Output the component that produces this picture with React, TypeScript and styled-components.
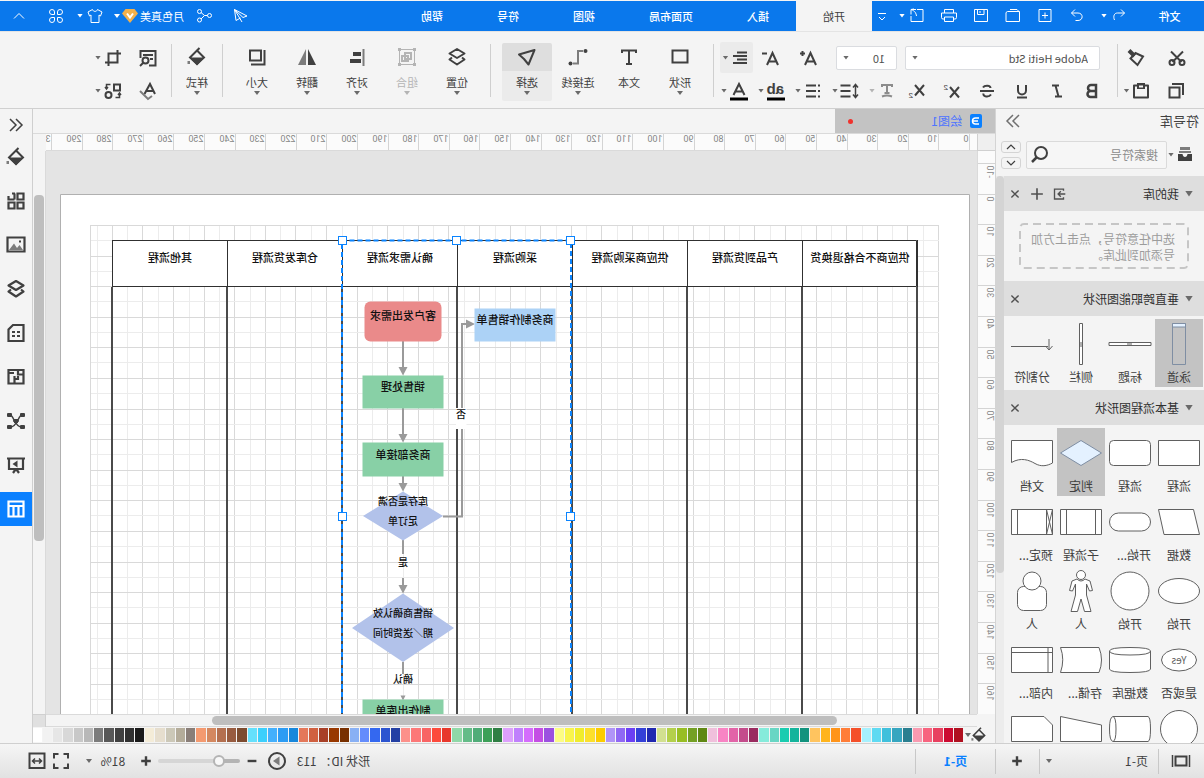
import React from "react";
import styled, { createGlobalStyle, css } from "styled-components";

const Global = createGlobalStyle`
  *, *::before, *::after { box-sizing: border-box; }
  html, body { margin: 0; height: 100%; background: #f4f4f4; }
  body { overflow: hidden; }
  button, input, select { font: inherit; color: inherit; margin: 0; padding: 0; border: 0; background: none; outline: none; }
`;

/* The whole window is shown as its mirror image. */
const Window = styled.div`
  display: flex;
  flex-direction: column;
  height: 100vh;
  padding-top: 1px;
  transform: scaleX(-1);
  background: #f4f4f4;
  color: #404040;
  font-family: "Noto Sans CJK SC", "Noto Sans", sans-serif;
  font-size: 12px;
  line-height: 16px;
`;

/* ---------- icons ---------- */

const Svg = styled.svg<{ $w?: number }>`
  display: block;
  flex: none;
  fill: none;
  stroke: currentColor;
  stroke-width: ${(p) => p.$w ?? 2};
  .f { fill: currentColor; stroke: none; }
  .g { stroke: #7c7c7c; }
  .gf { fill: #7c7c7c; stroke: none; }
  text { fill: currentColor; stroke: none; font-family: "Liberation Sans", sans-serif; }
`;

const glyphs: Record<string, React.ReactNode> = {
  undo: <path d="M8 3.500L4.500 7L8 10.500M4.500 7H11.500C15 7 16 10.500 14.500 14" />,
  redo: <path d="M12 3.500L15.500 7L12 10.500M15.500 7H9C3.500 7 3.500 14.500 9 14.500H11.500" />,
  add: <path d="M4 3.500h12v12H4zM10 6.500v6M7 9.500h6" />,
  open: <path d="M3.500 15.500V5.500h12l1.500 1v9zM4 5.500L6 3.500h7" />,
  save: <path d="M3.500 3.500h13v12h-13zM7 3.500v5h6.500v-5M11 5v2" />,
  print: <path d="M5.500 7V3.500h9V7M5.500 13H4A1.500 1.500 0 0 1 2.500 11.500V7h15v4.500A1.500 1.500 0 0 1 16 13h-1.500M5.500 11h9v4.500h-9z" />,
  exportFile: <path d="M10 3.500H4v12h12V10M11 3.500h5v5M16 3.500C12 5 11 7 10.500 10M13 3L16 3.500" />,
  more: <path d="M6 7.500h8M7 11l3 3 3-3" />,
  send: <path d="M16.500 3.500L4 10l4 1.500L16.500 3.500L15 14.500L10.500 12M16.500 3.500L9 16" />,
  share: <path d="M13.500 5.500a2 2 0 1 0 4 0a2 2 0 1 0-4 0M13.500 14a2 2 0 1 0 4 0a2 2 0 1 0-4 0M3.500 9.500a2 2 0 1 0 4 0a2 2 0 1 0-4 0M7.500 9.500h3L14 6.500M10.500 9.500L14 13" />,
  shirt: <path d="M7.500 3.500L3 6l1.500 4L6 9v7.500h8V9l1.500 1L17 6l-4.500-2.500C12 6 8 6 7.500 3.500z" />,
  apps: <path d="M3.500 6a2.500 2.500 0 1 1 5 0v2.500H6A2.500 2.500 0 0 1 3.500 6zM16.500 6a2.500 2.500 0 1 0-5 0v2.500H14A2.500 2.500 0 0 0 16.500 6zM3.500 14a2.500 2.500 0 1 0 5 0v-2.500H6A2.500 2.500 0 0 0 3.500 14zM16.500 14a2.500 2.500 0 1 1-5 0v-2.500H14a2.500 2.500 0 0 1 2.500 2.500z" />,
  up: <path d="M5 12.500l5-5 5 5" />,
  down: <path d="M5 7.500l5 5 5-5" />,
  cut: <><path d="M4 3.500L14.500 14M16 3.500L5.500 14" /><circle cx="5" cy="14.500" r="2.500" /><circle cx="15" cy="14.500" r="2.500" /></>,
  brush: <><path d="M4 8.500l5.500 8.500L16.500 10.500L11.500 5z" /><path d="M12.500 8L18 2.500" strokeWidth="4" /></>,
  copy: <path d="M7.500 6.500h10v10h-10zM4 14V3h11" />,
  paste: <><path d="M3 4.500h14v12H3z" strokeLinejoin="round" /><path className="f" d="M6 2h8v6H6z" /><path d="M8 5.500h4" stroke="#f4f4f4" strokeWidth="2" /></>,
  fontUp: <path d="M4 17L9.500 5L15 17M6 13.500h7M15 5.500h5M17.500 3v5" />,
  fontDown: <path d="M4 17L9.500 5L15 17M6 13.500h7M15 5.500h5" />,
  align: <path d="M3 4.500h10M3 8h14M3 11.500h10M3 15h14" />,
  bold: <path d="M6 4v12h5.500a3 3 0 0 0 0-6H6h5a3 3 0 0 0 0-6z" strokeWidth="2.500" />,
  italic: <path d="M8 4.500h7M11.500 4.500L8.500 15.500M5 15.500h7" />,
  underline: <path d="M6 4v5.500a4 4 0 0 0 8 0V4M5 16.500h10" />,
  strike: <path d="M14 6.500C12.500 4 6.500 4 6.500 7M6 13.500C8 16.500 14.500 16 13.500 12.500M3 10h14" />,
  sup: <><path d="M3 6l9 10.500M12 6L3 16.500" /><text x="14" y="9" fontSize="8">2</text></>,
  sub: <><path d="M3 4l9 10.500M12 4L3 14.500" /><text x="14" y="17" fontSize="8">2</text></>,
  textEffect: <path d="M5 6V4h10v2M10 4v8M7.500 12h5M5 15.500Q10 13.500 15 15.500" />,
  spacing: <><path d="M9.500 4.500h10M9.500 10h10M9.500 15.500h10" /><path d="M4.500 4v12M2 6.500l2.500-3 2.500 3M2 13.500l2.500 3 2.500-3" strokeWidth="1.500" /></>,
  list: <path d="M7 4.500h10M7 10h10M7 15.500h10M3 4.500h2M3 10h2M3 15.500h2" />,
  highlight: <><text x="2" y="13" fontSize="15" fontWeight="bold">ab</text><path d="M1 18h18" stroke="#000" strokeWidth="3" /></>,
  fontColor: <><path d="M4.500 14L10 3l5.500 11M6.500 10.500h7" /><path d="M1 18h18" stroke="#000" strokeWidth="3" /></>,
  rect: <path d="M2.500 3.500h15v12h-15z" />,
  text: <path d="M3 6V3.500h14V6M10 3.500V17M7 17h6" />,
  connector: <><path className="g" d="M5 4h5v12.500h5" /><circle className="f" cx="2.500" cy="4" r="2" /><circle className="f" cx="17.500" cy="16.500" r="2" /></>,
  select: <path d="M2.500 3L18 7.500L13 12L8.500 17.500z" strokeLinejoin="round" />,
  layers: <path d="M10 2l7.500 4.500L10 11L2.500 6.500zM5 10.500l-2.500 2L10 17.500l7.500-5-2.500-2" strokeLinejoin="round" />,
  group: <><path d="M2.500 2.500h15v15h-15z" strokeWidth="1" /><path d="M6 6h6v6H6zM9 9h6v5H9z" strokeWidth="2" /><path className="f" d="M1 1h3v3H1zM16 1h3v3h-3zM1 16h3v3H1zM16 16h3v3h-3z" /></>,
  alignObj: <><path d="M3.500 2v17" className="g" /><path className="f" d="M6 5h8v4H6zM6 12h11v4H6z" /></>,
  flip: <><path className="f" d="M9 2v16H1z" /><path className="gf" d="M11 2v16h8z" /></>,
  size: <path d="M6 3.500h11v10H6zM2.500 3v14.500H16" />,
  bucket: <><path d="M10 3.500L17 10.500L10 17L3 10.500zM10 3.500L7.500 1" strokeWidth="2" /><path className="f" d="M2.500 10.500h15L10 18.500z" /><path className="gf" d="M17 14h2.500v3H17z" /></>,
  findPage: <><path d="M9 17.500H2.500V3h15v7M5 7h10M5 11h3" /><circle cx="12.500" cy="12.500" r="3" /><path d="M15 15l3 3" /></>,
  spell: <><path d="M3 13L8 3l5.500 10M5 10h7" /><path className="g" d="M6 15l4 3 8-8" /></>,
  crop: <path d="M5.500 2v12.500H18M2 5.500h12.500V18" />,
  replace: <><path d="M3 3.500h6v6H3z" /><circle cx="14.500" cy="14" r="3" /><path d="M12.500 3.500h4v4M15 6l1.500 2L18 6M7.500 16.500h-4v-3M2 14l1.500-2L5 14" strokeWidth="1.500" /></>,
  chevR: <path d="M4 4l6 6-6 6M10 4l6 6-6 6" />,
  chevL: <path d="M16 4l-6 6 6 6M10 4l-6 6 6 6" />,
  drawer: <><path className="gf" d="M5 2h10v3H5zM4 6h12v2H4z" /><path className="f" d="M3 9h4.500q.5 3 2.500 3t2.500-3H17v7H3z" /></>,
  search: <><circle cx="9" cy="8" r="6" /><path d="M13.500 12.500L18 17" strokeWidth="2.500" /></>,
  importLib: <path d="M5 6.500V4.500h10v11H5v-2M3 10h8M8 7l3 3-3 3" />,
  plus: <path d="M10 4v12M4 10h12" />,
  thinPlus: <path d="M10 3.500v13M3.500 10h13" />,
  minus: <path d="M4.500 10h11" />,
  close: <path d="M6 6l8 8M14 6l-8 8" />,
  shapes: <path d="M2.500 2.500h6v6h-6zM11.500 8.500v-6M11 2.500h3M17.500 5v3.500h-6M2.500 11.500h6v6h-6zM11.500 11.500h6v6h-6z" />,
  image: <><path d="M1.500 2.500h17v14h-17z" /><path className="gf" d="M3 15l3.500-5 2.500 3 3-4.500 5 6.500z" /><path className="f" d="M5 5.500h2v2H5z" /></>,
  note: <path d="M2.500 2h10.500l4.500 4.500V18h-15zM6 9h3M11 9h3M6 13h3M11 13h3" />,
  plan: <path d="M2.500 3h15v13.500h-15zM8 3v4.500H3M8 9v3h3.500V9M11.500 12v4.500M12 6h5" />,
  net: <><path d="M4 4C8 4 8 16 16 16M16 4C12 4 12 16 4 16M7 10h6" strokeWidth="1.500" /><rect className="f" x="1" y="2" width="5" height="4" rx="1" /><rect className="f" x="14" y="2" width="5" height="4" rx="1" /><rect className="f" x="1" y="14" width="5" height="4" rx="1" /><rect className="f" x="14" y="14" width="5" height="4" rx="1" /><rect className="f" x="8" y="8" width="4" height="4" /></>,
  present: <><path d="M1 3.500h18M3 3.500v10.500h14V3.500M7 18l2.500-3.500M13 18l-2.500-3.500" /><path className="f" d="M8.500 5.500l5 3.500-5 3.500z" /></>,
  table: <path d="M2.500 2.500h15v15h-15zM2.500 7h15M7.500 7v10.500M12.500 7v10.500" />,
  pages: <><path d="M4.500 5.500h11v9h-11z" /><path d="M1.500 4v12M18.500 4v12" strokeWidth="1.500" /></>,
  play: <><circle cx="10" cy="10" r="8" /><path className="gf" d="M7.500 5.500l6.500 4.500-6.500 4.500z" /></>,
  full: <path d="M3 7.500V3h4.500M12.500 3H17v4.500M17 12.500V17h-4.500M7.500 17H3v-4.500" />,
  fit: <><path d="M2.500 2.500h15v14.500h-15z" /><path d="M5.500 10h9M8 7.500L5.500 10 8 12.500M12 7.500l2.500 2.500-2.500 2.500" strokeWidth="1.500" /></>,
};

const Icon = ({ name, size = 20, weight }: { name: string; size?: number; weight?: number }) => (
  <Svg viewBox="0 0 20 20" width={size} height={size} $w={weight} aria-hidden="true">
    {glyphs[name]}
  </Svg>
);

const Caret = styled.i<{ $color?: string; $big?: boolean }>`
  flex: none;
  width: ${(p) => (p.$big ? 8 : 6)}px;
  height: ${(p) => (p.$big ? 6 : 4)}px;
  background: ${(p) => p.$color ?? "#6a6a6a"};
  clip-path: polygon(0 0, 100% 0, 50% 100%);
`;

/* ---------- title bar ---------- */

const TitleBar = styled.header`
  flex: none;
  display: flex;
  align-items: stretch;
  height: 30px;
  background: #0a78ec;
  color: #fff;
  font-size: 11px;
`;
const MenuButton = styled.button<{ $w: number; $active?: boolean }>`
  width: ${(p) => p.$w}px;
  flex: none;
  font-weight: 500;
  ${(p) => p.$active && css`background: #f4f4f4; color: #404040; font-weight: 400;`}
`;
const QuickButton = styled.button<{ $w?: number }>`
  flex: none;
  width: ${(p) => p.$w ?? 32}px;
  display: flex;
  align-items: center;
  gap: 2px;
  padding-left: 6px;
  padding-bottom: 1px;
  white-space: nowrap;
`;
const Spacer = styled.div`flex: 1;`;
const Account = styled.button`
  display: flex;
  align-items: center;
  gap: 2px;
  width: 78px;
  padding-left: 5px;
  white-space: nowrap;
`;

/* ---------- ribbon ---------- */

const Ribbon = styled.div`
  flex: none;
  display: flex;
  align-items: flex-start;
  height: 78px;
  padding-top: 10px;
  border-top: 1px solid #e4e4e4;
  border-bottom: 1px solid #d0d0d0;
  font-size: 11px;
`;
const Divider = styled.div`
  flex: none;
  width: 1px;
  height: 53px;
  margin-top: 2px;
  background: #cfcfcf;
`;
const Group = styled.div<{ $l?: number; $r?: number; $gap?: number }>`
  flex: none;
  display: flex;
  gap: ${(p) => p.$gap ?? 0}px;
  padding: 0 ${(p) => p.$r ?? 0}px 0 ${(p) => p.$l ?? 0}px;
`;
const Rows = styled(Group)`
  flex-direction: column;
  gap: 2px;
`;
const Row = styled.div<{ $l?: number }>`
  display: flex;
  align-items: center;
  height: 31px;
  padding-left: ${(p) => p.$l ?? 0}px;
`;
const Tool = styled.button<{ $w: number; $off?: boolean; $active?: boolean; $start?: boolean }>`
  flex: none;
  width: ${(p) => p.$w}px;
  height: 31px;
  display: flex;
  align-items: center;
  justify-content: ${(p) => (p.$start ? "flex-start" : "center")};
  padding-left: ${(p) => (p.$start ? 3 : 0)}px;
  gap: 2px;
  border-radius: 2px;
  color: ${(p) => (p.$off ? "#8c8c8c" : "#404040")};
  background: ${(p) => (p.$active ? "#ebebeb" : "none")};
`;
const Field = styled.label<{ $w: number }>`
  flex: none;
  display: flex;
  align-items: center;
  width: ${(p) => p.$w}px;
  height: 24px;
  margin-right: 8px;
  padding: 0 6px 0 11px;
  background: #fff;
  border: 1px solid #dadce0;
  border-radius: 2px;
  select { flex: 1; min-width: 0; appearance: none; color: #505050; }
`;
const Big = styled.button<{ $off?: boolean; $active?: boolean }>`
  flex: none;
  display: flex;
  flex-direction: column;
  align-items: center;
  width: 50px;
  height: 58px;
  margin-top: 1px;
  border-radius: 2px;
  white-space: nowrap;
  color: ${(p) => (p.$off ? "#b4b4b4" : "#404040")};
  background: ${(p) => (p.$active ? "linear-gradient(#dedede 28px, #ebebeb 28px)" : "none")};
  span { height: 16px; margin: 3px 0 1px; }
`;
const BigIcon = styled.div`
  display: flex;
  align-items: center;
  height: 28px;
`;

const BigTool = ({ icon, label, caret = true, off, active }: { icon: string; label: string; caret?: boolean; off?: boolean; active?: boolean }) => (
  <Big $off={off} $active={active}>
    <BigIcon><Icon name={icon} /></BigIcon>
    <span>{label}</span>
    {caret && <Caret $color={off ? "#b4b4b4" : undefined} />}
  </Big>
);

/* ---------- symbol panel ---------- */

const Main = styled.main`
  flex: 1;
  min-height: 0;
  display: flex;
`;
const Panel = styled.aside`
  flex: none;
  width: 209px;
  display: flex;
  flex-direction: column;
  border-right: 1px solid #d4d4d4;
`;
const PanelHead = styled.div`
  flex: none;
  display: flex;
  justify-content: space-between;
  align-items: center;
  height: 24px;
  padding: 0 7px 0 5px;
  font-size: 13px;
  button { color: #707070; }
`;
const SearchRow = styled.div`
  flex: none;
  display: flex;
  align-items: center;
  height: 43px;
  padding: 0 5px 0 9px;
  > button { display: flex; align-items: center; gap: 1px; width: 28px; }
`;
const SearchBox = styled.div`
  flex: 1;
  min-width: 0;
  display: flex;
  align-items: center;
  height: 28px;
  margin-right: 5px;
  padding: 0 3px 0 8px;
  border: 1px solid #dadada;
  border-radius: 2px;
  background: #f6f6f6;
  input { flex: 1; min-width: 0; }
  input::placeholder { color: #8c8c8c; opacity: 1; }
`;
const Steps = styled.div`
  display: flex;
  flex-direction: column;
  gap: 4px;
  button {
    display: flex;
    justify-content: center;
    align-items: center;
    width: 20px;
    height: 12px;
    border: 1px solid #d4d4d4;
    border-radius: 3px;
  }
`;
const Library = styled.div`
  flex: 1;
  min-height: 0;
  display: flex;
  overflow: hidden;
`;
const Sections = styled.div`
  flex: 1;
  overflow: hidden;
`;
const PanelScroll = styled.div`
  width: 8px;
  background: #ececec;
  &::before { content: ""; display: block; height: 70%; border-radius: 4px; background: #d4d4d4; }
`;
const SectionHead = styled.div`
  display: flex;
  align-items: center;
  height: 35px;
  padding: 0 0 0 11px;
  background: #dedede;
  color: #303030;
  span { flex: 1; padding-left: 6px; }
  button { padding: 0 2px; color: #505050; }
`;
const DropArea = styled.div`
  position: relative;
  margin: 12px 15px;
  height: 46px;
  padding: 8px 10px 0 14px;
  color: #9c9c9c;
  white-space: nowrap;
  svg { position: absolute; left: 0; top: 0; width: 100%; height: 100%; }
`;
const Cells = styled.div`
  display: grid;
  grid-template-columns: repeat(4, 48px);
  column-gap: 1px;
  row-gap: 1px;
  padding: 3px 3px 3px 1px;
`;
const Cell = styled.button<{ $active?: boolean; $left?: boolean }>`
  display: flex;
  flex-direction: column;
  align-items: center;
  height: 68px;
  padding-top: 3px;
  background: ${(p) => (p.$active ? "#c3c3c3" : "none")};
  svg { flex: none; stroke: ${(p) => (p.$active ? "#7f8ea3" : "#606060")}; fill: ${(p) => (p.$active ? "#e4f1ff" : "#fff")}; }
  svg text { fill: #606060; font-size: 10px; }
  svg .n { fill: none; }
  span { margin-top: 3px; white-space: nowrap; ${(p) => p.$left && "align-self: flex-start; padding-left: 3px;"} }
`;

type Shape = { label?: string; draw: React.ReactNode; active?: boolean };
const laneShapes: Shape[] = [
  { label: "泳道", active: true, draw: <><path className="n" d="M15.500 1.500h13v41h-13z" /><path d="M15.500 1.500h13v3.500h-13z" /></> },
  { label: "标题", draw: <path d="M1 20.500h42v3H1zM20 22h5" /> },
  { label: "侧栏", draw: <path d="M20.500 1.500h3v41h-3zM22 20v5" /> },
  { label: "分割符", draw: <path className="n" d="M6 24.500h37M5 17v10M1.500 24l3.500 4 3.500-4" /> },
];
const flowShapes: Shape[] = [
  { label: "流程", draw: <path d="M1.500 9.500h41v25h-41z" /> },
  { label: "流程", draw: <rect x="1.500" y="9.500" width="41" height="25" rx="4" /> },
  { label: "判定", active: true, draw: <path d="M22 9.500L42.500 22L22 34.500L1.500 22z" /> },
  { label: "文档", draw: <path d="M1.500 9.500h41v22C33 26 25 29 19 32.500C13 36 7 35 1.500 32z" /> },
  { label: "数据", draw: <path d="M7.500 9.500h35L37 34.500H1.500z" /> },
  { label: "开始...", draw: <rect x="1.500" y="13" width="41" height="18" rx="9" /> },
  { label: "子流程", draw: <path d="M1.500 9.500h41v25h-41zM7.500 9.500v25M36.500 9.500v25" /> },
  { label: "预定...", draw: <path d="M1.500 9.500h41v25h-41zM7.500 9.500v25M36.500 9.500v25M1.500 9.500L7.500 34.500M7.500 9.500L1.500 34.500" /> },
  { label: "开始", draw: <ellipse cx="22" cy="22" rx="20.500" ry="12.500" /> },
  { label: "开始", draw: <circle cx="22" cy="22" r="19" /> },
  { label: "人", draw: <><path d="M18 10L13 12L10.500 21.500L13.500 22L16.500 15V26L12 42.500H18.500L22 30L25.500 42.500H32L27.500 26V15L30.500 22L33.500 21.500L31 12L26 10Q22 14 18 10z" /><circle cx="22" cy="6" r="4.500" /></> },
  { label: "人", draw: <><rect x="7.500" y="17.500" width="29" height="24" rx="6" /><circle cx="22" cy="12" r="9" /></> },
  { label: "是或否", draw: <><ellipse cx="22" cy="22" rx="17.500" ry="11" /><text x="22" y="26" textAnchor="middle" stroke="none">Yes</text></> },
  { label: "数据库", draw: <path d="M1.500 13v18q0 3.500 20.500 3.500t20.500-3.500V13Q42.500 9.500 22 9.500T1.500 13q0 4 20.500 4t20.500-4" /> },
  { label: "存储...", draw: <path d="M4 9.500h38.500q-4.500 12 0 25H4Q-1 22 4 9.500z" /> },
  { label: "内部...", draw: <path d="M1.500 9.500h41v25h-41zM1.500 14.500h41M6 9.500v25" /> },
  { draw: <circle cx="22" cy="22" r="18.500" /> },
  { draw: <path d="M39 9.500H4Q1.500 10 1.500 22T4 34.500h35Q42.500 34 42.500 22T39 9.500Q36 10 36 22t3 12.500" /> },
  { draw: <path d="M1.500 18L42.500 9.500V34.500H1.500z" /> },
  { draw: <path d="M10 9.500H42.500V34.500H1.500V18z" /> },
];
const ShapeCells = ({ items }: { items: Shape[] }) => (
  <Cells>
    {items.map((s, i) => (
      <Cell key={i} $active={s.active} $left={s.label?.endsWith("...")}>
        <svg width="44" height="44" viewBox="0 0 44 44">{s.draw}</svg>
        {s.label && <span>{s.label}</span>}
      </Cell>
    ))}
  </Cells>
);

/* ---------- work area ---------- */

const Work = styled.section`
  flex: 1;
  min-width: 0;
  display: flex;
  flex-direction: column;
`;
const DocTabs = styled.div`
  flex: none;
  display: flex;
  height: 25px;
  border-bottom: 1px solid #dadada;
`;
const DocTab = styled.button`
  display: flex;
  align-items: center;
  gap: 7px;
  width: 160px;
  padding: 0 12px;
  background: #c3c3c3;
  color: #4d74ff;
  span { flex: 1; text-align: left; }
  i { width: 5px; height: 5px; border-radius: 50%; background: #f0322d; margin-right: 1px; }
`;
const Board = styled.div`
  flex: 1;
  min-height: 0;
  display: grid;
  grid-template-columns: 18px minmax(0, 1fr) 13px;
  grid-template-rows: 17px minmax(0, 1fr) 13px;
`;
const Corner = styled.div<{ $dark?: boolean }>`
  background: ${(p) => (p.$dark ? "#e0e0e0" : "#efefef")};
  border: solid #d0d0d0;
  border-width: ${(p) => (p.$dark ? "1px 0 0 1px" : "0 1px 1px 0")};
`;
const HRuler = styled.div`
  display: flex;
  overflow: hidden;
  background: #fbfbfb;
  border-bottom: 1px solid #dadada;
`;
const VRuler = styled.div`
  overflow: hidden;
  background: #fbfbfb;
  border-right: 1px solid #dadada;
`;
const RulerSvg = styled.svg`
  flex: none;
  display: block;
  text { fill: #868686; font: 9px Roboto, sans-serif; }
  line { stroke: #d4d4d4; }
`;
const Viewport = styled.div`
  overflow: hidden;
  background: #e4e4e4;
  svg { display: block; }
  text { fill: #111; font-size: 11px; font-weight: 500; text-anchor: middle; }
  .small text { font-size: 10px; }
`;
const VScroll = styled.div`
  border-left: 1px solid #dadada;
  padding: 44px 1px 0 1px;
  &::before { content: ""; display: block; height: 346px; max-height: 100%; border-radius: 4px; background: #bebebe; }
`;
const HScroll = styled.div`
  border-top: 1px solid #dadada;
  border-bottom: 1px solid #dadada;
  padding: 1px 0 1px 15%;
  &::before { content: ""; display: block; width: 79%; height: 9px; border-radius: 5px; background: #bebebe; }
`;
const Palette = styled.div`
  flex: none;
  display: flex;
  align-items: center;
  height: 16px;
  padding-left: 8px;
  > button { display: flex; align-items: center; width: 24px; height: 15px; }
`;
const Swatches = styled.div`
  flex: 1;
  display: flex;
  gap: 1px;
`;
const Swatch = styled.button<{ $c: string }>`
  flex: 1;
  min-width: 0;
  height: 14px;
  background: ${(p) => p.$c};
`;
const colors = (
  "b01020 cc0a30 e8405f f7647f f89ab0 2a7f90 36a6c0 40c0dc 5fdaf2 a6f0fd f4502a ff7d38 ff941a ffb41c ffc45f " +
  "12937e 14b49c 1accb0 68d6c4 86ebdb 9a2c60 c44c8c e264a8 f884c4 f0c0dc 608814 74a024 98be24 b4d04c d2e090 " +
  "2028b0 3440d8 6c40f4 9068f4 b094f8 fccc00 fce02c f0ec2c f8f44c fcfc84 9c50e0 c44ee4 d46cfc c080fc dca0fc " +
  "2f7f44 3ca058 50ac78 64bc88 90d8a8 e8382c fc4a3c f86464 fc7878 fc908a 2440a4 2c54d0 3468f0 648cfc 88b0f4 " +
  "783000 983800 a84028 d06040 e4785a 1888dc 2c9cf4 44b0fc 3ccffc 64e0fc 7c4c30 985c40 b47050 d48860 f49a70 " +
  "8a7e78 b4ac9a ccc8b8 e6dece f4ecd8 1a1a1a 303030 404040 585858 7c7c7c b8b8b8 c8c8c8 d8d8d8 e6e6e6 f2f2f2 ffffff"
).split(" ");

const range = (n: number) => Array.from({ length: n }, (_, i) => i);
const at = (start: number, i: number) => Math.round(start + i * 30.6) + 0.5;

const TopRuler = () => (
  <RulerSvg width="960" height="16" viewBox="227 0 960 16">
    {range(31).map((i) => (
      <g key={i}>
        <line x1={at(234, i)} x2={at(234, i)} y1="0" y2="16" />
        <text x={at(234, i) + 1} y="8">{i * 10}</text>
      </g>
    ))}
  </RulerSvg>
);
const SideRuler = () => (
  <RulerSvg width="17" height="600" viewBox="0 151 17 600">
    {range(18).map((i) => {
      const label = String(i * 10 - 10);
      const y = at(163, i);
      return (
        <g key={i}>
          <line x1="0" x2="17" y1={y} y2={y} />
          <text x="8" y={y + 2} textAnchor="end" transform={`rotate(-90 8 ${y + 2})`}>{label}</text>
        </g>
      );
    })}
  </RulerSvg>
);

const lanes = ["供应商不合格退换货", "产品到货流程", "供应商采购流程", "采购流程", "确认需求流程", "仓库发货流程", "其他流程"];
const laneX = [287, 402, 517, 632, 747, 862, 977, 1092];

const Diagram = () => (
  <svg width="960" height="600" viewBox="227 151 960 600">
    <path d="M234.500 760V194.500H1143.500V760" fill="#fff" stroke="#b0b0b0" />
    {range(28).map((i) => (
      <React.Fragment key={i}>
        <path d={`M${at(280, i)} 225V760`} stroke="#ececec" />
        <path d={`M${at(265, i)} 225V760`} stroke="#d9d9d9" />
      </React.Fragment>
    ))}
    {range(18).map((i) => (
      <React.Fragment key={i}>
        <path d={`M265 ${at(240, i)}H1114`} stroke="#ececec" />
        <path d={`M265 ${at(225, i)}H1114`} stroke="#d9d9d9" />
      </React.Fragment>
    ))}
    <path d="M1113.500 225V760" stroke="#d9d9d9" />
    <path d="M287.500 240.500H1091.500V286.500H287.500z" fill="#fff" stroke="#303030" />
    {laneX.map((x) => (
      <React.Fragment key={x}>
        <path d={`M${x - 0.5} 240V287`} stroke="#303030" />
        <path d={`M${x} 287V760`} stroke="#4a4a4a" strokeWidth="2" />
      </React.Fragment>
    ))}
    {lanes.map((t, i) => <text key={t} x={laneX[i] + 57} y="262">{t}</text>)}

    <path d="M801 341V370M801 408V437M801 476V486M801 540V554M801 578V588M801 662V674M761 516.500H742V429M742 408V324H736" stroke="#9a9a9a" strokeWidth="2" fill="none" />
    <path fill="#9a9a9a" d="M796.500 367h9l-4.500 8.500zM796.500 434h9l-4.500 8.500zM796.500 483h9l-4.500 8.500zM796.500 585h9l-4.500 8.500zM798.500 695.500h5l-2.500 5zM738 319.500v9l-9-4.500z" />
    <path fill="#fff" d="M737.500 408h10.500v21h-10.500z" />

    <rect x="762.500" y="301.500" width="77" height="40" rx="6" fill="#ea8a8a" />
    <path fill="#acd2f6" d="M648.500 308.500h81v33h-81z" />
    <path fill="#88d0a6" d="M760.500 375.500h81v33h-81zM760.500 442.500h81v34h-81zM760.500 699.500h81v60h-81z" />
    <path fill="#b2c2ea" d="M801 491.500L841 516L801 540.500L761 516zM801 593.500L852 628L801 662L750 628z" />
    <text x="801" y="320">客户发出需求</text>
    <text x="689" y="324">商务制作销售单</text>
    <text x="801" y="391">销售处理</text>
    <text x="801" y="459">商务部接单</text>
    <text x="801" y="715">制作出库单</text>
    <g className="small">
      <text x="801" y="505">库存是否满</text>
      <text x="801" y="525">足订单</text>
      <text x="801" y="566">是</text>
      <text x="801" y="617">销售商确认效</text>
      <text x="801" y="637">期／送货时间</text>
      <text x="801" y="683">确认</text>
      <text x="743" y="418">否</text>
    </g>

    <path d="M633 760V240.500H862V760" fill="none" stroke="#0a84ff" strokeWidth="2" strokeDasharray="5 3" />
    {[[633, 240], [747, 240], [861, 240], [633, 516], [861, 516]].map(([x, y]) => (
      <rect key={`${x}-${y}`} x={x - 3.5} y={y - 3.5} width="8" height="8" fill="#fff" stroke="#0a84ff" />
    ))}
  </svg>
);

/* ---------- side bar and status bar ---------- */

const SideBar = styled.nav`
  flex: none;
  width: 33px;
  display: flex;
  flex-direction: column;
  border-left: 1px solid #cfcfcf;
`;
const SideButton = styled.button<{ $active?: boolean; $first?: boolean }>`
  flex: none;
  display: flex;
  align-items: center;
  justify-content: center;
  height: ${(p) => (p.$first ? 31 : 34)}px;
  margin-bottom: ${(p) => (p.$first ? 0 : 10)}px;
  background: ${(p) => (p.$active ? "#0a80ff" : "none")};
  color: ${(p) => (p.$active ? "#fff" : "#404040")};
`;
const StatusBar = styled.footer`
  flex: none;
  display: flex;
  align-items: center;
  height: 35px;
  padding-right: 25px;
  border-top: 1px solid #cfcfcf;
  background: linear-gradient(#f5f5f5, #e2e2e2);
  white-space: nowrap;
`;
const Bit = styled.button<{ $w: number }>`
  flex: none;
  width: ${(p) => p.$w}px;
  height: 25px;
  display: flex;
  align-items: center;
  justify-content: center;
`;
const PageSelect = styled(Bit)`
  justify-content: space-between;
  padding: 0 6px 0 10px;
`;
const ZoomMenu = styled(Bit)`
  justify-content: flex-start;
`;
const PageTab = styled(Bit)`
  color: #0a80ff;
  font-weight: 700;
`;
const Sep = styled.div`
  flex: none;
  width: 1px;
  height: 25px;
  background: #c8c8c8;
`;
const ShapeId = styled.span`
  width: 80px;
`;
const Zoom = styled.input`
  appearance: none;
  width: 82px;
  height: 14px;
  &::-webkit-slider-runnable-track {
    height: 4px;
    border-radius: 2px;
    background: linear-gradient(90deg, #b4b4b4 24%, #d6d6d6 24%);
  }
  &::-webkit-slider-thumb {
    appearance: none;
    width: 12px;
    height: 12px;
    margin-top: -4px;
    border-radius: 50%;
    border: 2px solid #b4b4b4;
    background: #f8f8f8;
  }
`;

const side = ["bucket", "shapes", "image", "layers", "note", "plan", "net", "present", "table"];

export default function App() {
  return (
    <Window>
      <Global />
      <TitleBar>
        <MenuButton $w={69}>文件</MenuButton>
        <QuickButton $w={42}><Icon name="undo" weight={1} /><Caret $color="#fff" /></QuickButton>
        {["redo", "add", "open", "save", "print"].map((n) => <QuickButton key={n}><Icon name={n} weight={1} /></QuickButton>)}
        <QuickButton $w={35}><Icon name="exportFile" weight={1} /><Caret $color="#fff" /></QuickButton>
        <QuickButton $w={26}><Icon name="more" weight={1} /></QuickButton>
        <MenuButton $w={76} $active>开始</MenuButton>
        <MenuButton $w={76}>插入</MenuButton>
        <MenuButton $w={98}>页面布局</MenuButton>
        <MenuButton $w={76}>视图</MenuButton>
        <MenuButton $w={76}>符号</MenuButton>
        <MenuButton $w={76}>帮助</MenuButton>
        <Spacer />
        <QuickButton $w={36}><Icon name="send" weight={1} /></QuickButton>
        <QuickButton><Icon name="share" weight={1} /></QuickButton>
        <Account>
          月色真美
          <svg width="16" height="16" viewBox="0 0 16 16" aria-hidden="true">
            <path d="M3.500 1h9L16 5.500L8 15L0 5.500z" fill="#f2b04c" />
            <path d="M5 5.500l3 4 3-4" fill="none" stroke="#fff" strokeWidth="2" />
          </svg>
          <Caret $color="#fff" />
        </Account>
        <QuickButton $w={39}><Icon name="shirt" weight={1} /><Caret $color="#fff" /></QuickButton>
        <QuickButton $w={37}><Icon name="apps" weight={1} /></QuickButton>
        <QuickButton $w={35}><Icon name="up" weight={1} /></QuickButton>
      </TitleBar>

      <Ribbon>
        <Rows $l={7}>
          <Row>
            <Tool $w={40}><Icon name="cut" /></Tool>
            <Tool $w={39}><Icon name="brush" /></Tool>
          </Row>
          <Row>
            <Tool $w={40}><Icon name="copy" /></Tool>
            <Tool $w={39}><Icon name="paste" /><Caret /></Tool>
          </Row>
        </Rows>
        <Divider />
        <Rows $r={1}>
          <Row $l={17}>
            <Field $w={195}><select aria-label="字体"><option>Adobe Heiti Std</option></select><Caret /></Field>
            <Field $w={61}><select aria-label="字号"><option>10</option></select><Caret /></Field>
            <Tool $w={36}><Icon name="fontUp" /></Tool>
            <Tool $w={39}><Icon name="fontDown" /></Tool>
            <Tool $w={33} $active><Icon name="align" /><Caret /></Tool>
          </Row>
          <Row $l={7}>
            {["bold", "italic", "underline", "strike", "sup", "sub"].map((n) => <Tool key={n} $w={35}><Icon name={n} /></Tool>)}
            <Tool $w={37} $start $off><Icon name="textEffect" /><Caret $color="#b4b4b4" /></Tool>
            {["spacing", "list", "highlight", "fontColor"].map((n) => <Tool key={n} $w={37} $start><Icon name={n} /><Caret /></Tool>)}
          </Row>
        </Rows>
        <Divider />
        <Group $l={8} $r={11} $gap={1}>
          <BigTool icon="rect" label="形状" />
          <BigTool icon="text" label="文本" caret={false} />
          <BigTool icon="connector" label="连接线" />
          <BigTool icon="select" label="选择" active />
        </Group>
        <Divider />
        <Group $l={8} $r={9}>
          <BigTool icon="layers" label="位置" />
          <BigTool icon="group" label="组合" off />
          <BigTool icon="alignObj" label="对齐" />
          <BigTool icon="flip" label="翻转" />
          <BigTool icon="size" label="大小" />
        </Group>
        <Divider />
        <Group><BigTool icon="bucket" label="样式" /></Group>
        <Divider />
        <Rows>
          <Row>
            <Tool $w={45}><Icon name="findPage" /></Tool>
            <Tool $w={37} $start><Icon name="crop" /><Caret /></Tool>
          </Row>
          <Row>
            <Tool $w={45}><Icon name="spell" /></Tool>
            <Tool $w={37} $start><Icon name="replace" /><Caret /></Tool>
          </Row>
        </Rows>
      </Ribbon>

      <Main>
        <Panel>
          <PanelHead>符号库<button aria-label="收起"><Icon name="chevR" weight={1.5} size={20} /></button></PanelHead>
          <SearchRow>
            <button aria-label="符号库菜单"><Icon name="drawer" /><Caret /></button>
            <SearchBox><input aria-label="搜索符号" placeholder="搜索符号" /><Icon name="search" /></SearchBox>
            <Steps>
              <button aria-label="上一个"><Icon name="up" weight={1.5} size={16} /></button>
              <button aria-label="下一个"><Icon name="down" weight={1.5} size={16} /></button>
            </Steps>
          </SearchRow>
          <Library>
            <Sections>
              <SectionHead>
                <Caret $big /><span>我的库</span>
                <button aria-label="导入"><Icon name="importLib" weight={1.5} size={18} /></button>
                <button aria-label="新建"><Icon name="thinPlus" weight={1.8} size={18} /></button>
                <button aria-label="关闭"><Icon name="close" weight={1.5} size={18} /></button>
              </SectionHead>
              <DropArea>
                <svg aria-hidden="true"><rect x="1" y="1" width="168" height="44" rx="4" fill="none" stroke="#c6c6c6" strokeWidth="2" strokeDasharray="8 5" /></svg>
                选中任意符号，点击上方加<br />号添加到此库。
              </DropArea>
              <SectionHead>
                <Caret $big /><span>垂直跨职能图形状</span>
                <button aria-label="关闭"><Icon name="close" weight={1.5} size={18} /></button>
              </SectionHead>
              <ShapeCells items={laneShapes} />
              <SectionHead>
                <Caret $big /><span>基本流程图形状</span>
                <button aria-label="关闭"><Icon name="close" weight={1.5} size={18} /></button>
              </SectionHead>
              <ShapeCells items={flowShapes} />
            </Sections>
            <PanelScroll />
          </Library>
        </Panel>

        <Work>
          <DocTabs>
            <DocTab>
              <svg width="14" height="14" viewBox="0 0 14 14" aria-hidden="true">
                <rect x="1" y="0" width="12" height="14" rx="2" fill="#0a80ff" />
                <path d="M4 4h3.500a3 3 0 0 1 0 6H4M5 7h5" fill="none" stroke="#fff" strokeWidth="1.500" />
              </svg>
              <span>绘图1</span>
              <i />
            </DocTab>
          </DocTabs>
          <Board>
            <Corner />
            <HRuler><TopRuler /></HRuler>
            <div />
            <VRuler><SideRuler /></VRuler>
            <Viewport><Diagram /></Viewport>
            <VScroll />
            <div />
            <HScroll />
            <Corner $dark />
          </Board>
          <Palette>
            <button aria-label="填充颜色"><Icon name="bucket" size={16} /><Caret /></button>
            <Swatches>{colors.map((c) => <Swatch key={c} $c={`#${c}`} aria-label={`#${c}`} />)}</Swatches>
          </Palette>
        </Work>

        <SideBar>
          <SideButton $first aria-label="展开"><Icon name="chevL" weight={1.5} size={20} /></SideButton>
          {side.map((n) => <SideButton key={n} $active={n === "table"} aria-label={n}><Icon name={n} weight={2.2} /></SideButton>)}
        </SideBar>
      </Main>

      <StatusBar>
        <Bit $w={45} aria-label="页面面板"><Icon name="pages" /></Bit>
        <Sep />
        <PageSelect $w={118}>页-1<Caret /></PageSelect>
        <Sep />
        <Bit $w={43} aria-label="添加页面"><Icon name="plus" size={16} weight={3} /></Bit>
        <Sep />
        <PageTab $w={79}>页-1</PageTab>
        <Sep />
        <Spacer />
        <ShapeId>形状 ID：&nbsp;113</ShapeId>
        <Bit $w={26} aria-label="播放"><Icon name="play" /></Bit>
        <Bit $w={24} aria-label="缩小"><Icon name="minus" size={16} weight={3} /></Bit>
        <Zoom type="range" min="0" max="100" defaultValue="22" aria-label="缩放" />
        <Bit $w={24} aria-label="放大"><Icon name="plus" size={16} weight={3} /></Bit>
        <Bit $w={42}>81%</Bit>
        <ZoomMenu $w={19} aria-label="缩放比例"><Caret /></ZoomMenu>
        <Bit $w={24} aria-label="全屏"><Icon name="full" /></Bit>
        <Bit $w={24} aria-label="适合宽度"><Icon name="fit" /></Bit>
      </StatusBar>
    </Window>
  );
}
